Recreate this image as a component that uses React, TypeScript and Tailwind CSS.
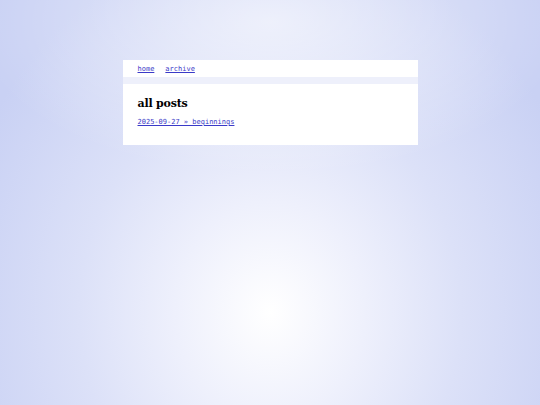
export default function App() {
  return (
    <div className="min-h-[405px] w-full bg-[radial-gradient(ellipse_at_50%_77%,#ffffff_0%,#eef0fc_25%,#dce1f8_50%,#c9d1f4_85%)] pt-[60px]">
      <div className="relative">
        <div className="pointer-events-none absolute inset-x-0 top-[-60px] h-[220px] bg-[radial-gradient(ellipse_55%_70%_at_50%_10%,rgba(255,255,255,0.6),rgba(255,255,255,0))]" />
        <div className="relative mx-auto w-[295px] bg-white/60">
          <nav className="flex h-[17px] items-center gap-[11px] bg-white px-[15px] pt-[2px] font-['DejaVu_Sans_Mono',monospace] text-[7px]">
            <a href="#" className="text-[#3a3ac8] underline">home</a>
            <a href="#" className="text-[#3a3ac8] underline">archive</a>
          </nav>
          <div className="h-[7px] bg-[#eef0fb]" />
          <main className="h-[61px] bg-white px-[15px] pt-[12px]">
            <h1 className="font-['DejaVu_Serif',serif] text-[11px] font-bold leading-[16px] tracking-[-0.2px] text-black">all posts</h1>
            <a href="#" className="mt-[5px] block font-['DejaVu_Sans_Mono',monospace] text-[7px] leading-[10px] text-[#3a3ac8] underline">2025-09-27 » beginnings</a>
          </main>
        </div>
      </div>
    </div>
  );
}
